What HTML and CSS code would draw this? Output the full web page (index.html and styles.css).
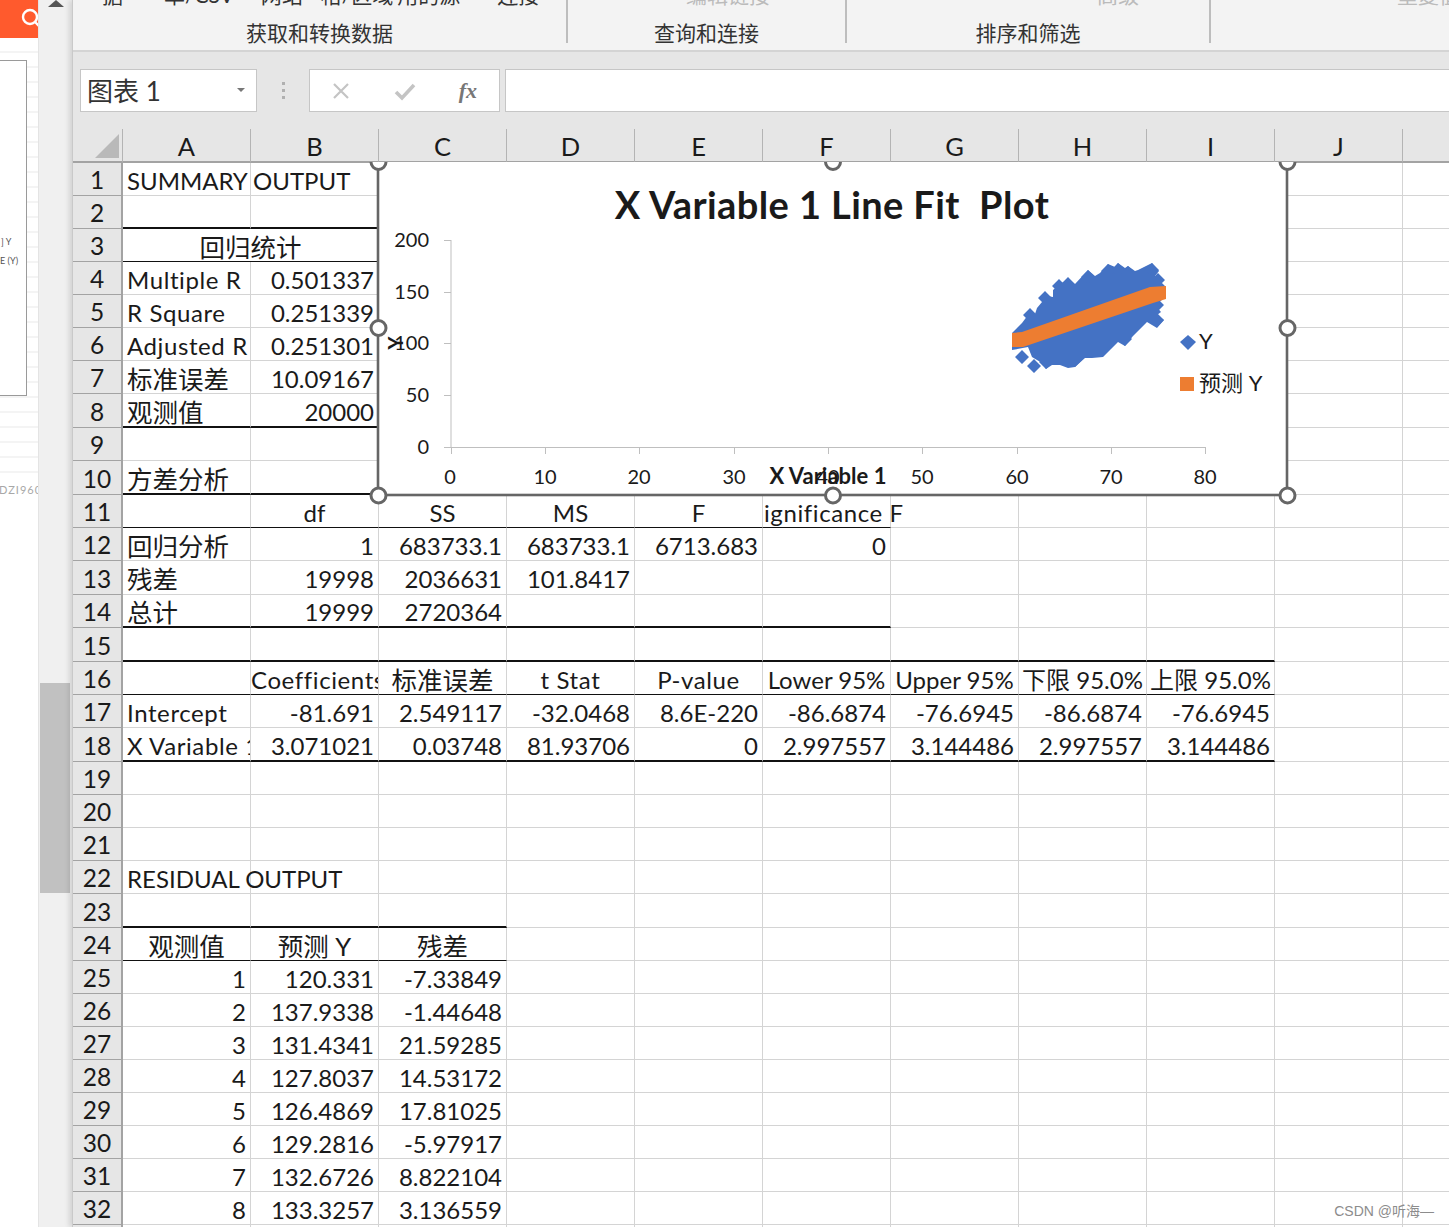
FILE: index.html
```html
<!DOCTYPE html>
<html>
<head>
    <meta charset="UTF-8">
    <title>回归分析 - Excel</title>
    <link rel="stylesheet" href="styles.css">
</head>
<body>
<div class="app">
    <!-- article preview pane on the far left -->
    <div class="preview">
        <div class="search-btn">
            <svg width="38" height="38" viewBox="0 0 38 38"><circle cx="30" cy="17" r="7" fill="none" stroke="#fff" stroke-width="2.4"/><path d="M35 22l4 4" stroke="#fff" stroke-width="2.4"/></svg>
        </div>
        <div class="preview-body">
            <div class="thumb">
                <span class="thumb-a">] Y</span>
                <span class="thumb-b">E (Y)</span>
            </div>
            <div class="preview-id">DZI960</div>
        </div>
    </div>

    <div class="scrollbar">
        <div class="arrow-up"></div>
        <div class="thumb-bar"></div>
    </div>

    <div class="main">
        <div class="ribbon">
            <div class="group group-get">
                <div class="group-top"><span>据</span><span>单/CSV</span><span>网站</span><span>格/区域</span><span>用的源</span><span>连接</span></div>
                <div class="group-label">获取和转换数据</div>
            </div>
            <div class="group group-query">
                <div class="group-top muted"><span>编辑链接</span></div>
                <div class="group-label">查询和连接</div>
            </div>
            <div class="group group-sort">
                <div class="group-top muted"><span>高级</span></div>
                <div class="group-label">排序和筛选</div>
            </div>
            <div class="group group-rest">
                <div class="group-top muted"><span>重复值</span></div>
            </div>
        </div>

        <div class="formula-bar">
            <div class="name-box"><span>图表 1</span><i class="caret"></i></div>
            <div class="dots"><i></i><i></i><i></i></div>
            <div class="fx-box">
                <svg width="20" height="20" viewBox="0 0 20 20"><path d="M3 3l14 14M17 3L3 17" stroke="#c4c4c4" stroke-width="2.2" fill="none"/></svg>
                <svg width="22" height="20" viewBox="0 0 22 20"><path d="M2 11l6 6L20 4" stroke="#c4c4c4" stroke-width="3.6" fill="none"/></svg>
                <span class="fx">fx</span>
            </div>
            <div class="formula-input"></div>
        </div>

        <div class="sheet-wrap">
            <table class="sheet">
                <colgroup><col class="col-head"><col span="11" class="col-cell"></colgroup>
                <thead>
                    <tr><th class="corner"><i></i></th><th>A</th><th>B</th><th>C</th><th>D</th><th>E</th><th>F</th><th>G</th><th>H</th><th>I</th><th>J</th><th></th></tr>
                </thead>
                <tbody>
                    <tr><th>1</th><td class="pl">SUMMARY OUTPUT</td><td></td><td></td><td></td><td></td><td></td><td></td><td></td><td></td><td></td><td></td></tr>
                    <tr><th>2</th><td class="hv"></td><td class="hv"></td><td></td><td></td><td></td><td></td><td></td><td></td><td></td><td></td><td></td></tr>
                    <tr><th>3</th><td class="ct ln zh" colspan="2">回归统计</td><td></td><td></td><td></td><td></td><td></td><td></td><td></td><td></td><td></td></tr>
                    <tr><th>4</th><td class="pl lc">Multiple R</td><td class="nm">0.501337</td><td></td><td></td><td></td><td></td><td></td><td></td><td></td><td></td><td></td></tr>
                    <tr><th>5</th><td class="pl lc">R Square</td><td class="nm">0.251339</td><td></td><td></td><td></td><td></td><td></td><td></td><td></td><td></td><td></td></tr>
                    <tr><th>6</th><td class="pl lc">Adjusted R</td><td class="nm">0.251301</td><td></td><td></td><td></td><td></td><td></td><td></td><td></td><td></td><td></td></tr>
                    <tr><th>7</th><td class="pl zh">标准误差</td><td class="nm">10.09167</td><td></td><td></td><td></td><td></td><td></td><td></td><td></td><td></td><td></td></tr>
                    <tr class="tall"><th>8</th><td class="pl hv zh">观测值</td><td class="nm hv">20000</td><td></td><td></td><td></td><td></td><td></td><td></td><td></td><td></td><td></td></tr>
                    <tr><th>9</th><td></td><td></td><td></td><td></td><td></td><td></td><td></td><td></td><td></td><td></td><td></td></tr>
                    <tr class="tall"><th>10</th><td class="pl hv zh">方差分析</td><td class="hv"></td><td></td><td></td><td></td><td></td><td></td><td></td><td></td><td></td><td></td></tr>
                    <tr><th>11</th><td class="ln"></td><td class="ct ln">df</td><td class="ct ln">SS</td><td class="ct ln">MS</td><td class="ct ln">F</td><td class="ln sig lc">ignificance F</td><td></td><td></td><td></td><td></td><td></td></tr>
                    <tr><th>12</th><td class="pl zh">回归分析</td><td class="nm">1</td><td class="nm">683733.1</td><td class="nm">683733.1</td><td class="nm">6713.683</td><td class="nm">0</td><td></td><td></td><td></td><td></td><td></td></tr>
                    <tr class="tall"><th>13</th><td class="pl zh">残差</td><td class="nm">19998</td><td class="nm">2036631</td><td class="nm">101.8417</td><td></td><td></td><td></td><td></td><td></td><td></td><td></td></tr>
                    <tr><th>14</th><td class="pl hv zh">总计</td><td class="nm hv">19999</td><td class="nm hv">2720364</td><td class="hv"></td><td class="hv"></td><td class="hv"></td><td></td><td></td><td></td><td></td><td></td></tr>
                    <tr class="tall"><th>15</th><td class="hv"></td><td class="hv"></td><td class="hv"></td><td class="hv"></td><td class="hv"></td><td class="hv"></td><td class="hv"></td><td class="hv"></td><td class="hv"></td><td></td><td></td></tr>
                    <tr><th>16</th><td class="ln"></td><td class="ct ln cut lc">Coefficients</td><td class="ct ln zh">标准误差</td><td class="ct ln lc">t Stat</td><td class="ct ln lc">P-value</td><td class="ct ln">Lower 95%</td><td class="ct ln">Upper 95%</td><td class="ct ln">下限 95.0%</td><td class="ct ln">上限 95.0%</td><td></td><td></td></tr>
                    <tr><th>17</th><td class="pl lc">Intercept</td><td class="nm">-81.691</td><td class="nm">2.549117</td><td class="nm">-32.0468</td><td class="nm">8.6E-220</td><td class="nm">-86.6874</td><td class="nm">-76.6945</td><td class="nm">-86.6874</td><td class="nm">-76.6945</td><td></td><td></td></tr>
                    <tr class="tall"><th>18</th><td class="pl hv cut lc">X Variable 1</td><td class="nm hv">3.071021</td><td class="nm hv">0.03748</td><td class="nm hv">81.93706</td><td class="nm hv">0</td><td class="nm hv">2.997557</td><td class="nm hv">3.144486</td><td class="nm hv">2.997557</td><td class="nm hv">3.144486</td><td></td><td></td></tr>
                    <tr><th>19</th><td></td><td></td><td></td><td></td><td></td><td></td><td></td><td></td><td></td><td></td><td></td></tr>
                    <tr><th>20</th><td></td><td></td><td></td><td></td><td></td><td></td><td></td><td></td><td></td><td></td><td></td></tr>
                    <tr><th>21</th><td></td><td></td><td></td><td></td><td></td><td></td><td></td><td></td><td></td><td></td><td></td></tr>
                    <tr><th>22</th><td class="pl">RESIDUAL OUTPUT</td><td></td><td></td><td></td><td></td><td></td><td></td><td></td><td></td><td></td><td></td></tr>
                    <tr class="tall"><th>23</th><td class="hv"></td><td class="hv"></td><td class="hv"></td><td></td><td></td><td></td><td></td><td></td><td></td><td></td><td></td></tr>
                    <tr><th>24</th><td class="ct ln zh">观测值</td><td class="ct ln zh">预测 Y</td><td class="ct ln zh">残差</td><td></td><td></td><td></td><td></td><td></td><td></td><td></td><td></td></tr>
                    <tr><th>25</th><td class="nm">1</td><td class="nm">120.331</td><td class="nm">-7.33849</td><td></td><td></td><td></td><td></td><td></td><td></td><td></td><td></td></tr>
                    <tr><th>26</th><td class="nm">2</td><td class="nm">137.9338</td><td class="nm">-1.44648</td><td></td><td></td><td></td><td></td><td></td><td></td><td></td><td></td></tr>
                    <tr><th>27</th><td class="nm">3</td><td class="nm">131.4341</td><td class="nm">21.59285</td><td></td><td></td><td></td><td></td><td></td><td></td><td></td><td></td></tr>
                    <tr><th>28</th><td class="nm">4</td><td class="nm">127.8037</td><td class="nm">14.53172</td><td></td><td></td><td></td><td></td><td></td><td></td><td></td><td></td></tr>
                    <tr><th>29</th><td class="nm">5</td><td class="nm">126.4869</td><td class="nm">17.81025</td><td></td><td></td><td></td><td></td><td></td><td></td><td></td><td></td></tr>
                    <tr><th>30</th><td class="nm">6</td><td class="nm">129.2816</td><td class="nm">-5.97917</td><td></td><td></td><td></td><td></td><td></td><td></td><td></td><td></td></tr>
                    <tr><th>31</th><td class="nm">7</td><td class="nm">132.6726</td><td class="nm">8.822104</td><td></td><td></td><td></td><td></td><td></td><td></td><td></td><td></td></tr>
                    <tr><th>32</th><td class="nm">8</td><td class="nm">133.3257</td><td class="nm">3.136559</td><td></td><td></td><td></td><td></td><td></td><td></td><td></td><td></td></tr>
                    <tr><th></th><td></td><td></td><td></td><td></td><td></td><td></td><td></td><td></td><td></td><td></td><td></td></tr>
                </tbody>
            </table>

            <!-- embedded line fit chart, floats over the cells -->
            <svg class="chart" width="940" height="350" viewBox="365 162 940 350">
                <rect x="378" y="150" width="909" height="345" fill="#fff" stroke="#666" stroke-width="2.6"/>
                <text class="chart-title" x="832" y="219" text-anchor="middle">X Variable 1 Line Fit  Plot</text>

                <g stroke="#bfbfbf" stroke-width="1" fill="none">
                    <path d="M451 240V447.5H1205"/>
                    <path d="M444 240.500h7M444 292.500h7M444 343.500h7M444 395.500h7M444 447.500h7"/>
                    <path d="M451.500 447v7M545.500 447v7M639.500 447v7M734.500 447v7M828.500 447v7M922.500 447v7M1017.500 447v7M1111.500 447v7M1205.500 447v7"/>
                </g>

                <g class="axis-y" text-anchor="end">
                    <text x="429" y="247">200</text>
                    <text x="429" y="299">150</text>
                    <text x="429" y="350">100</text>
                    <text x="429" y="402">50</text>
                    <text x="429" y="454">0</text>
                </g>
                <text class="axis-name" transform="translate(403 343) rotate(-90)" text-anchor="middle">Y</text>

                <g class="axis-x" text-anchor="middle">
                    <text x="450" y="484">0</text>
                    <text x="545" y="484">10</text>
                    <text x="639" y="484">20</text>
                    <text x="734" y="484">30</text>
                    <text x="828" y="484">40</text>
                    <text x="922" y="484">50</text>
                    <text x="1017" y="484">60</text>
                    <text x="1111" y="484">70</text>
                    <text x="1205" y="484">80</text>
                </g>
                <text class="axis-name axis-x-name" x="828" y="484" text-anchor="middle">X Variable 1</text>

                <!-- scatter cloud: body plus the diamonds that stick out along its edge -->
                <path fill="#4472c4" d="M1012 333L1018 327L1022 323L1028 315L1034 317L1037 308L1047 296L1053 297L1053 290L1060 284L1066 287L1067 282L1075 284L1088 270L1095 276L1100 273L1108 264L1115 267L1118 263L1125 268L1128 266L1135 271L1138 270L1152 263L1159 271L1155 276L1165 286L1166 297L1155 305L1161 312L1157 315L1164 320L1157 328L1147 322L1133 336L1125 346L1118 342L1103 357L1092 358L1085 358L1075 367L1068 368L1060 365L1052 365L1046 369L1042 363L1032 357L1028 347L1012 350Z"/>
                <path fill="#4472c4" d="M1022 350l7 7-7 7-7-7zM1034 359l7 7-7 7-7-7zM1030 308l7 7-7 7-7-7zM1045 291l7 7-7 7-7-7zM1059 279l7 7-7 7-7-7zM1068 277l7 7-7 7-7-7zM1088 270l7 7-7 7-7-7zM1108 264l7 7-7 7-7-7zM1118 263l7 7-7 7-7-7zM1128 266l7 7-7 7-7-7zM1152 263l7 7-7 7-7-7zM1158 273l7 7-7 7-7-7zM1157 298l7 7-7 7-7-7zM1157 313l7 7-7 7-7-7zM1125 332l7 7-7 7-7-7zM1075 353l7 7-7 7-7-7zM1060 351l7 7-7 7-7-7zM1046 355l7 7-7 7-7-7zM1102 343l7 7-7 7-7-7z"/>
                <!-- predicted line -->
                <path fill="#ed7d31" d="M1012 333L1022 332L1150 287L1166 286V299L1153 303L1023 347H1012Z"/>

                <!-- legend -->
                <path fill="#4472c4" d="M1188 335l8 7-8 8-8-8z"/>
                <text class="legend" x="1199" y="349">Y</text>
                <rect x="1180" y="377" width="14" height="14" fill="#ed7d31"/>
                <text class="legend" x="1199" y="391">预测 Y</text>

                <!-- selection handles -->
                <g fill="#fff" stroke="#666" stroke-width="3">
                    <circle cx="378.500" cy="162" r="7.500"/>
                    <circle cx="833" cy="162" r="7.500"/>
                    <circle cx="1287.500" cy="162" r="7.500"/>
                    <circle cx="378.500" cy="328" r="7.500"/>
                    <circle cx="1287.500" cy="328" r="7.500"/>
                    <circle cx="378.500" cy="495.500" r="7.500"/>
                    <circle cx="833" cy="495.500" r="7.500"/>
                    <circle cx="1287.500" cy="495.500" r="7.500"/>
                </g>
            </svg>
        </div>
    </div>
</div>
<div class="watermark">CSDN @听海—</div>
</body>
</html>
```

FILE: styles.css
```css
html, body {
    margin: 0;
    padding: 0;
    height: 100%;
    overflow: hidden;
}
body {
    font-family: "Lato", "Noto Sans CJK SC", sans-serif;
    color: #222;
    background: #fff;
}
.app {
    display: flex;
    height: 1227px;
    overflow: hidden;
}

/* left preview pane */
.preview {
    width: 38px;
    flex: none;
    overflow: hidden;
}
.search-btn {
    height: 38px;
    background: #ff5a2d;
}
.preview-body {
    padding-top: 22px;
    height: 436px;
    background: repeating-linear-gradient(#fff 0, #fff 13px, #e9e9e9 14px, #fff 15px);
}
.thumb {
    width: 27px;
    height: 336px;
    box-sizing: border-box;
    background: #fff;
    border: 1px solid #9a9a9a;
    border-left: 0;
    font-size: 9px;
    color: #555;
    white-space: nowrap;
    position: relative;
}
.thumb-a, .thumb-b {
    position: absolute;
    left: 1px;
}
.thumb-a { top: 175px; }
.thumb-b { top: 194px; left: 0; }
.preview-id {
    margin-top: 87px;
    font-size: 11px;
    color: #a8a8a8;
    background: #fff;
    letter-spacing: 1px;
    margin-left: -1px;
}

/* vertical scrollbar of the preview pane */
.scrollbar {
    width: 34px;
    flex: none;
    background: #f0f0f0;
    border-left: 1px solid #e4e4e4;
    box-sizing: border-box;
    position: relative;
}
.arrow-up {
    width: 0;
    margin: 0 0 0 9px;
    border-left: 8px solid transparent;
    border-right: 8px solid transparent;
    border-bottom: 7px solid #555;
}
.thumb-bar {
    margin: 676px 2px 0 1px;
    height: 210px;
    background: #c1c1c1;
}

.main {
    flex: 1;
    min-width: 0;
    border-left: 1px solid #c9c9c9;
    box-shadow: -3px 0 5px rgba(0, 0, 0, 0.12);
    position: relative;
}

/* ribbon */
.ribbon {
    display: flex;
    height: 50px;
    background: #f3f3f3;
    border-bottom: 2px solid #d4d4d4;
    font-size: 21px;
    color: #333;
    overflow: hidden;
}
.group {
    box-sizing: border-box;
    height: 43px;
    border-right: 2px solid #bdbdbd;
    flex: none;
    position: relative;
    text-align: center;
}
.group-get { width: 495px; }
.group-query { width: 279px; }
.group-sort { width: 364px; }
.group-rest { border-right: 0; flex: 1; }
.group-top {
    height: 9px;
    display: flex;
    align-items: flex-end;
    overflow: hidden;
    font-size: 21px;
    line-height: 28px;
    white-space: nowrap;
}
.group-top span {
    flex: none;
    height: 28px;
    margin-bottom: 0;
    margin-top: -19px;
    align-self: flex-start;
}
.group-get .group-top { padding-left: 29px; }
.group-get .group-top span:nth-child(2) { margin-left: 41px; }
.group-get .group-top span:nth-child(3) { margin-left: 27px; }
.group-get .group-top span:nth-child(4) { margin-left: 18px; }
.group-get .group-top span:nth-child(5) { margin-left: 4px; }
.group-get .group-top span:nth-child(6) { margin-left: 37px; }
.muted { color: #bbb; }
.group-query .group-top { padding-left: 118px; }
.group-sort .group-top { padding-left: 250px; }
.group-rest .group-top { padding-left: 186px; }
.group-label {
    line-height: 30px;
    margin-top: 9px;
}

/* name box and formula bar */
.formula-bar {
    display: flex;
    align-items: center;
    height: 77px;
    box-sizing: border-box;
    padding: 17px 0 17px 7px;
    background: #e6e6e6;
}
.name-box {
    display: flex;
    align-items: center;
    justify-content: space-between;
    width: 177px;
    height: 43px;
    box-sizing: border-box;
    background: #fff;
    border: 1px solid #c6c6c6;
    padding: 0 11px 2px 6px;
    font-size: 26px;
    color: #333;
}
.caret {
    border-left: 4px solid transparent;
    border-right: 4px solid transparent;
    border-top: 4px solid #777;
}
.dots {
    width: 52px;
    display: flex;
    flex-direction: column;
    align-items: center;
    gap: 4px;
}
.dots i {
    width: 3px;
    height: 3px;
    background: #b0b0b0;
}
.fx-box {
    display: flex;
    align-items: center;
    justify-content: space-between;
    width: 191px;
    height: 43px;
    box-sizing: border-box;
    background: #fff;
    border: 1px solid #c6c6c6;
    padding: 0 22px 0 21px;
}
.fx {
    font-family: "Liberation Serif", serif;
    font-style: italic;
    font-weight: bold;
    font-size: 22px;
    color: #777;
}
.formula-input {
    flex: 1;
    height: 43px;
    box-sizing: border-box;
    margin-left: 5px;
    background: #fff;
    border: 1px solid #c6c6c6;
    border-right: 0;
}

/* worksheet */
.sheet-wrap {
    position: relative;
}
.sheet {
    table-layout: fixed;
    width: 1458px;
    border-collapse: separate;
    border-spacing: 0;
    font-size: 24px;
    line-height: 28px;
    color: #1a1a1a;
}
.col-head { width: 50px; }
.col-cell { width: 128px; }
.sheet thead tr { height: 34px; }
.sheet tbody tr { height: 33px; }
.sheet tbody tr.tall { height: 34px; }
.sheet th {
    padding: 0;
    font-weight: normal;
    font-size: 24.5px;
    background: #e6e6e6;
    box-sizing: border-box;
}
.sheet thead th {
    font-size: 25.5px;
    border-right: 1px solid #b4b4b4;
    border-bottom: 2px solid #a3a3a3;
    padding-top: 1px;
    line-height: 30px;
}
.sheet tbody th {
    border-right: 2px solid #a3a3a3;
    border-bottom: 1px solid #a3a3a3;
    padding-top: 2px;
}
.corner {
    vertical-align: bottom;
    text-align: right;
}
.corner i {
    display: block;
    width: 0;
    margin: 0 3px 3px auto;
    border-left: 24px solid transparent;
    border-bottom: 24px solid #b9b9b9;
}
.sheet td {
    padding: 3px 0 0;
    box-sizing: border-box;
    border-right: 1px solid #d4d4d4;
    border-bottom: 1px solid #d4d4d4;
    white-space: nowrap;
    vertical-align: middle;
}
td.pl { padding-left: 4px; }
td.nm { text-align: right; padding-right: 4px; }
td.ct { text-align: center; }
td.lc { letter-spacing: 0.6px; }
td.zh { font-size: 25.5px; }
td.hv { border-bottom: 2px solid #111; }
td.ln { border-bottom: 1px solid #111; }
td.cut { overflow: hidden; }
td.sig { padding-left: 1px; }

.chart {
    position: absolute;
    left: 292px;
    top: 33px;
}
.chart text {
    fill: #1a1a1a;
}
.chart-title {
    font-size: 38px;
    font-weight: bold;
    white-space: pre;
    letter-spacing: 0.4px;
}
.axis-y text, .axis-x text {
    font-size: 20px;
}
.axis-name {
    font-size: 20px;
    font-weight: bold;
}
.axis-x-name {
    font-size: 22px;
}
.legend {
    font-size: 22px;
}

.watermark {
    position: absolute;
    right: 15px;
    bottom: 7px;
    font-family: "Liberation Sans", "Noto Sans CJK SC", sans-serif;
    font-size: 14px;
    color: #8c8c8c;
}
```
